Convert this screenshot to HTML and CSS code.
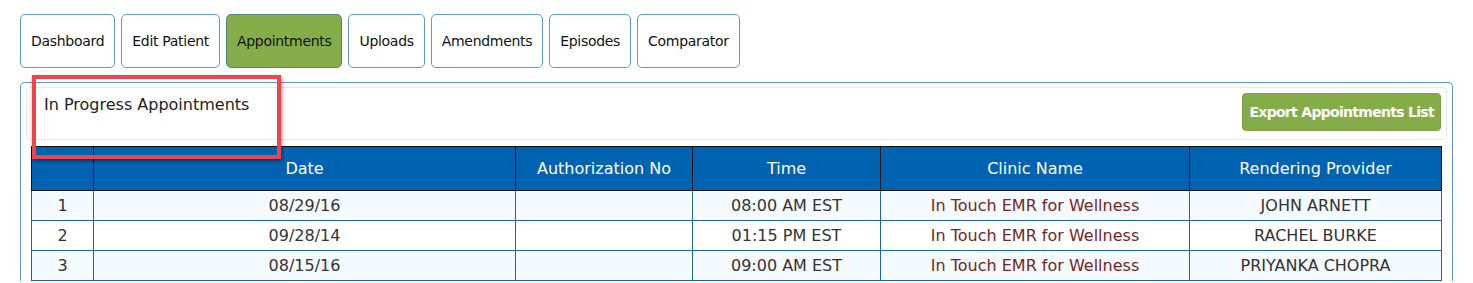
FILE: index.html
```html
<!DOCTYPE html>
<html lang="en">
<head>
    <meta charset="UTF-8">
    <title>Patient - Appointments</title>
    <link rel="stylesheet" href="styles.css">
</head>
<body>
    <!-- Tabs -->
    <nav class="tabs">
        <a class="tab" href="#">Dashboard</a>
        <a class="tab" href="#">Edit Patient</a>
        <a class="tab active" href="#">Appointments</a>
        <a class="tab" href="#">Uploads</a>
        <a class="tab" href="#">Amendments</a>
        <a class="tab" href="#">Episodes</a>
        <a class="tab" href="#">Comparator</a>
    </nav>

    <!-- Appointments panel -->
    <section class="panel">
        <div class="panel-head">
            <h2 class="panel-title">In Progress Appointments</h2>
            <button class="export-btn">Export Appointments List</button>
            <div class="highlight"></div>
        </div>

        <table class="grid">
            <thead>
                <tr>
                    <th class="col-num"></th>
                    <th class="col-date">Date</th>
                    <th class="col-auth">Authorization No</th>
                    <th class="col-time">Time</th>
                    <th class="col-clinic">Clinic Name</th>
                    <th>Rendering Provider</th>
                </tr>
            </thead>
            <tbody>
                <tr>
                    <td>1</td>
                    <td>08/29/16</td>
                    <td></td>
                    <td>08:00 AM EST</td>
                    <td class="clinic">In Touch EMR for Wellness</td>
                    <td>JOHN ARNETT</td>
                </tr>
                <tr>
                    <td>2</td>
                    <td>09/28/14</td>
                    <td></td>
                    <td>01:15 PM EST</td>
                    <td class="clinic">In Touch EMR for Wellness</td>
                    <td>RACHEL BURKE</td>
                </tr>
                <tr>
                    <td>3</td>
                    <td>08/15/16</td>
                    <td></td>
                    <td>09:00 AM EST</td>
                    <td class="clinic">In Touch EMR for Wellness</td>
                    <td>PRIYANKA CHOPRA</td>
                </tr>
            </tbody>
        </table>
    </section>
</body>
</html>
```

FILE: styles.css
```css
* {
    margin: 0;
    padding: 0;
    box-sizing: border-box;
}

body {
    font-family: 'DejaVu Sans', sans-serif;
    font-size: 14px;
    color: #333;
    background: #fff;
    padding: 14px 20px 0 20px;
}

/* Tabs */
.tabs {
    display: flex;
    gap: 6px;
}

.tab {
    display: flex;
    align-items: center;
    height: 54px;
    padding: 0 10px;
    border: 1px solid #5b9bd0;
    border-radius: 5px;
    color: #111;
    text-decoration: none;
    font-size: 14px;
    letter-spacing: -0.3px;
}

.tab.active {
    background: #84ad4a;
    border-color: #4f8a8b;
}

/* Panel */
.panel {
    margin-top: 14px;
    width: 1433px;
    border: 1px solid #5b9bd0;
    border-bottom: none;
    border-radius: 5px 5px 0 0;
    padding: 4px 5px 0 5px;
}

.panel-head {
    position: relative;
    display: flex;
    justify-content: space-between;
    align-items: flex-start;
    height: 53px;
    border: 1px solid #e6e6e6;
    border-radius: 4px;
    padding: 5px 5px 0 17px;
}

.panel-title {
    font-size: 16px;
    font-weight: normal;
    color: #222;
    padding-top: 2px;
}

.export-btn {
    background: #84ad4a;
    color: #fff;
    border: 1px solid #7ba443;
    border-radius: 4px;
    height: 38px;
    padding: 0 6px;
    font-family: 'DejaVu Sans', sans-serif;
    font-size: 14px;
    font-weight: bold;
    letter-spacing: -0.7px;
}

/* annotation box drawn over the title */
.highlight {
    position: absolute;
    left: 5px;
    top: -13px;
    width: 249px;
    height: 84px;
    border: 4px solid #f0444a;
    box-shadow: 1px 2px 4px rgba(0,0,0,0.45);
    pointer-events: none;
}

/* Table */
.grid {
    margin: 6px 5px 0 5px;
    width: 1411px;
    border-collapse: collapse;
    text-align: center;
    font-size: 16px;
}

.grid th {
    background: #0063b1;
    color: #fff;
    font-weight: normal;
    height: 44px;
    border: 1px solid #111;
}

.grid td {
    height: 30px;
    border: 1px solid #1a66b5;
    color: #333;
}

.grid tbody tr:nth-child(odd) td {
    background: #f5faff;
}

.grid td.clinic {
    color: #74261f;
}

.col-num { width: 62px; }
.col-date { width: 422px; }
.col-auth { width: 177px; }
.col-time { width: 188px; }
.col-clinic { width: 309px; }
```
